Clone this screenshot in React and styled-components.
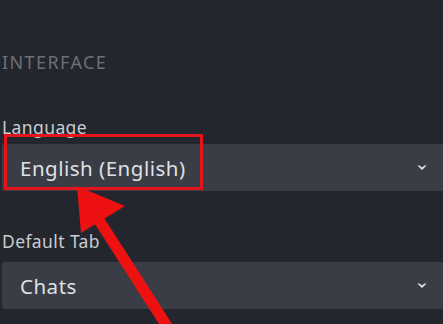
import React from "react";
import styled, { createGlobalStyle } from "styled-components";

const Global = createGlobalStyle`
  html, body { margin: 0; padding: 0; background: #23262d; }
  body { font-family: "Noto Sans", "Open Sans", sans-serif; }
`;

const Page = styled.div`
  position: relative;
  width: 443px;
  height: 324px;
  overflow: hidden;
  background: #23262d;
  box-sizing: border-box;
  padding: 50px 0 0 2px;
`;

const SectionTitle = styled.div`
  font-size: 18px;
  line-height: 24px;
  color: #6c7078;
  letter-spacing: 1.4px;
  margin-bottom: 41px;
`;

const Field = styled.div`
  display: flex;
  flex-direction: column;
  margin-bottom: ${(p) => p.$mb || 0}px;
`;

const Label = styled.div`
  font-size: 17.5px;
  line-height: 24px;
  color: #c9ccd0;
  letter-spacing: 0.4px;
  margin-bottom: ${(p) => p.$gap}px;
`;

const Select = styled.div`
  display: flex;
  align-items: center;
  justify-content: space-between;
  height: 47px;
  border-radius: 3px 0 0 3px;
  background: #3a3d45;
  padding: 0 16px 0 18px;
  box-sizing: border-box;
`;

const Value = styled.span`
  font-size: 20.5px;
  color: #dfe1e4;
  letter-spacing: 0.5px;
`;

const Chevron = () => (
  <svg width="10" height="6" viewBox="0 0 10 6">
    <path d="M0.5 0.5 L5 5 L9.5 0.5 L7.5 0.5 L5 2.6 L2.5 0.5 Z" fill="#e3e5e8" />
  </svg>
);

const Highlight = styled.div`
  position: absolute;
  left: 4px;
  top: 134px;
  width: 199px;
  height: 56px;
  box-sizing: border-box;
  border: 3px solid #e3141b;
  pointer-events: none;
`;

const ArrowLayer = styled.svg`
  position: absolute;
  left: 0;
  top: 0;
  pointer-events: none;
`;

export default function App() {
  return (
    <>
      <Global />
      <Page>
        <SectionTitle>INTERFACE</SectionTitle>
        <Field $mb={38}>
          <Label $gap={5}>Language</Label>
          <Select>
            <Value>English (English)</Value>
            <Chevron />
          </Select>
        </Field>
        <Field>
          <Label $gap={9}>Default Tab</Label>
          <Select>
            <Value>Chats</Value>
            <Chevron />
          </Select>
        </Field>
        <Highlight />
        <ArrowLayer width="443" height="324" viewBox="0 0 443 324">
          <line x1="86" y1="200" x2="172" y2="334" stroke="#ee1111" strokeWidth="11" />
          <polygon points="77,186 125,206 81,233" fill="#ee1111" />
        </ArrowLayer>
      </Page>
    </>
  );
}
